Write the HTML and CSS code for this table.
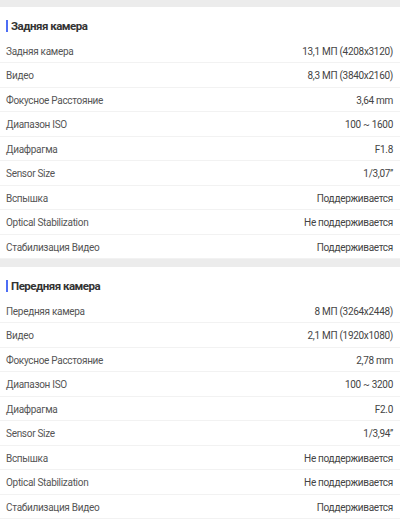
FILE: index.html
```html
<!DOCTYPE html>
<html lang="ru">
<head>
<meta charset="utf-8">
<link rel="stylesheet" href="styles.css">
</head>
<body>
<div class="page">
  <div class="gap gap-top"></div>
  <section class="section">
    <h2 class="title">Задняя камера</h2>
    <div class="row"><span class="label">Задняя камера</span><span class="value">13,1 МП (4208x3120)</span></div>
    <div class="row"><span class="label">Видео</span><span class="value">8,3 МП (3840x2160)</span></div>
    <div class="row"><span class="label">Фокусное Расстояние</span><span class="value">3,64 mm</span></div>
    <div class="row"><span class="label">Диапазон ISO</span><span class="value">100 ~ 1600</span></div>
    <div class="row"><span class="label">Диафрагма</span><span class="value">F1.8</span></div>
    <div class="row"><span class="label">Sensor Size</span><span class="value">1/3,07’’</span></div>
    <div class="row"><span class="label">Вспышка</span><span class="value">Поддерживается</span></div>
    <div class="row"><span class="label">Optical Stabilization</span><span class="value">Не поддерживается</span></div>
    <div class="row"><span class="label">Стабилизация Видео</span><span class="value">Поддерживается</span></div>
  </section>
  <div class="gap"></div>
  <section class="section">
    <h2 class="title">Передняя камера</h2>
    <div class="row"><span class="label">Передняя камера</span><span class="value">8 МП (3264x2448)</span></div>
    <div class="row"><span class="label">Видео</span><span class="value">2,1 МП (1920x1080)</span></div>
    <div class="row"><span class="label">Фокусное Расстояние</span><span class="value">2,78 mm</span></div>
    <div class="row"><span class="label">Диапазон ISO</span><span class="value">100 ~ 3200</span></div>
    <div class="row"><span class="label">Диафрагма</span><span class="value">F2.0</span></div>
    <div class="row"><span class="label">Sensor Size</span><span class="value">1/3,94’’</span></div>
    <div class="row"><span class="label">Вспышка</span><span class="value">Не поддерживается</span></div>
    <div class="row"><span class="label">Optical Stabilization</span><span class="value">Не поддерживается</span></div>
    <div class="row"><span class="label">Стабилизация Видео</span><span class="value">Поддерживается</span></div>
  </section>
</div>
</body>
</html>
```

FILE: styles.css
```css
html, body {
  margin: 0;
  padding: 0;
  background: #ffffff;
}
body {
  font-family: Roboto, "Noto Sans", sans-serif;
  color: #444;
}
.page {
  width: 400px;
  overflow: hidden;
}
.gap {
  height: 8px;
  background: #ececec;
}
.gap-top {
  height: 7px;
}
.section {
  background: #fff;
}
.title {
  margin: 0;
  height: 31.5px;
  box-sizing: border-box;
  padding: 13px 0 0 6px;
  display: flex;
  align-items: flex-start;
  font-size: 11.5px;
  line-height: 12px;
  letter-spacing: -0.5px;
  font-weight: 700;
  color: #333;
}
.title::before {
  content: "";
  width: 2px;
  height: 12px;
  background: #4d6ef5;
  margin-right: 3px;
  flex: none;
}
.row {
  height: 24.5px;
  box-sizing: border-box;
  border-bottom: 1px solid #f2f2f2;
  padding: 2px 7px 0 6px;
  display: flex;
  align-items: center;
  justify-content: space-between;
  font-size: 10px;
  letter-spacing: -0.3px;
  color: #555;
}
.value {
  color: #444;
}
```
